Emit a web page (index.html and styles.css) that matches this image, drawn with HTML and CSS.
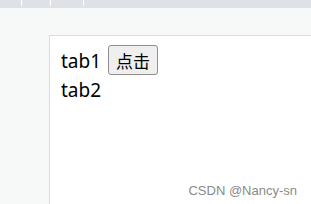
FILE: index.html
```html
<!DOCTYPE html>
<html lang="zh">
<head>
  <meta charset="UTF-8" />
  <title>tab</title>
  <link rel="stylesheet" href="styles.css">
</head>
<body>
  <div class="tabbar">
    <span class="tab t1"></span>
    <span class="tab t2"></span>
    <span class="tab t3"></span>
  </div>
  <div class="page">
    <div class="panel">
      <div class="row">tab1 <button class="btn">点击</button></div>
      <div class="row">tab2</div>
    </div>
  </div>
  <div class="mark">CSDN @Nancy-sn</div>
</body>
</html>
```

FILE: styles.css
```css
body {
  margin: 0;
  width: 311px;
  height: 204px;
  overflow: hidden;
  background: #f7f8f8;
  font-family: "Noto Sans", "Noto Sans CJK SC", sans-serif;
  position: relative;
}
.tabbar {
  height: 8px;
  background: #dee1e6;
  display: flex;
}
.tab {
  height: 6px;
  border-right: 1px solid #fff;
}
.t1 { width: 21px; }
.t2 { width: 28px; }
.t3 { width: 32px; }
.page {
  padding: 27px 0 0 49px;
}
.panel {
  background: #fff;
  border: 1px solid #dcdcdc;
  border-right: none;
  border-bottom: none;
  height: 160px;
  padding: 11px 11px 0;
  font-size: 19px;
  color: #000;
}
.row {
  line-height: 29px;
  height: 29px;
}
.btn {
  font-family: "Noto Sans CJK SC", sans-serif;
  font-size: 17px;
  line-height: 27px;
  height: 30px;
  width: 50px;
  padding: 0;
  margin: -2px 0 0 2px;
  background: #efefef;
  border: 1px solid #8f8f8f;
  border-radius: 3px;
  vertical-align: top;
}
.mark {
  position: absolute;
  right: 14px;
  bottom: 6px;
  font-family: "Liberation Sans", sans-serif;
  font-size: 13px;
  color: #8a8a8a;
}
```
